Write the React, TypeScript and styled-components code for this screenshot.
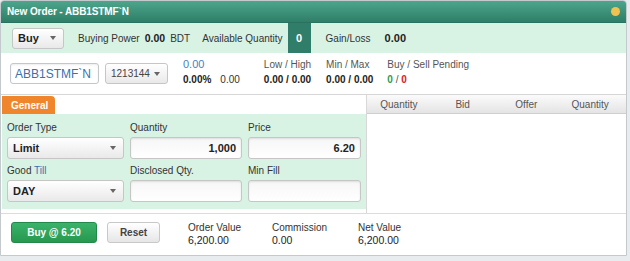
import styled, { createGlobalStyle } from "styled-components";

const GlobalStyle = createGlobalStyle`
  body {
    margin: 0;
    background: #e9ecef;
    font-family: "Liberation Sans", Arial, sans-serif;
    font-size: 10px;
    color: #333;
  }
`;

const Window = styled.div`
  width: 625px;
  height: 254px;
  border: 1px solid #c4c9cd;
  border-radius: 4px 4px 0 0;
  background: #fff;
  display: flex;
  flex-direction: column;
  overflow: hidden;
`;

const TitleBar = styled.div`
  height: 21px;
  flex: none;
  display: flex;
  align-items: center;
  justify-content: space-between;
  padding: 0 6px 0 6px;
  background: linear-gradient(#4ca68b, #2f7e68);
  border-bottom: 1px solid #2a7260;
`;

const Title = styled.div`
  color: #fff;
  font-weight: bold;
  font-size: 10px;
  letter-spacing: -0.1px;
`;

const Dot = styled.span`
  width: 9px;
  height: 9px;
  border-radius: 50%;
  background: #f0c251;
`;

const InfoBar = styled.div`
  height: 30px;
  flex: none;
  display: flex;
  align-items: center;
  padding-left: 11px;
  background: #d8f2e4;
`;

const SelectBox = styled.div<{ $w: number; $h?: number; $bold?: boolean }>`
  width: ${(p) => p.$w}px;
  height: ${(p) => p.$h ?? 21}px;
  box-sizing: border-box;
  flex: none;
  display: flex;
  align-items: center;
  justify-content: space-between;
  padding: 0 7px 0 5px;
  border: 1px solid #c6c6c6;
  border-radius: 3px;
  background: linear-gradient(#ffffff, #e9e9e9);
  font-weight: ${(p) => (p.$bold ? "bold" : "normal")};
  font-size: ${(p) => (p.$bold ? 11 : 10)}px;
  color: ${(p) => (p.$bold ? "#222" : "#444")};
`;

const Caret = styled.span`
  width: 0;
  height: 0;
  border-left: 3.5px solid transparent;
  border-right: 3.5px solid transparent;
  border-top: 4px solid #666;
`;

const Text = styled.span<{ $ml?: number }>`
  margin-left: ${(p) => p.$ml ?? 0}px;
  color: #333;
  white-space: nowrap;
`;

const Strong = styled.span<{ $ml?: number }>`
  margin-left: ${(p) => p.$ml ?? 0}px;
  font-weight: bold;
  font-size: 10.5px;
  color: #222;
`;

const AvailBox = styled.div`
  align-self: stretch;
  width: 23px;
  margin-left: 5px;
  display: flex;
  align-items: center;
  justify-content: center;
  background: #307e69;
  color: #fff;
  font-weight: bold;
  font-size: 11px;
`;

const SymbolRow = styled.div`
  height: 41px;
  flex: none;
  display: flex;
  align-items: center;
  padding-left: 9px;
  border-bottom: 1px solid #d6d6d6;
`;

const SymbolInput = styled.div`
  width: 89px;
  height: 21px;
  box-sizing: border-box;
  display: flex;
  align-items: center;
  padding-left: 4px;
  border: 1px solid #c2c7cc;
  border-radius: 3px;
  color: #3a70ae;
  font-size: 12px;
  box-shadow: inset 0 1px 2px rgba(0, 0, 0, 0.08);
`;

const Stat = styled.div<{ $ml: number }>`
  margin-left: ${(p) => p.$ml}px;
  display: flex;
  flex-direction: column;
  gap: 4px;
  margin-top: -3px;
`;

const StatLabel = styled.span<{ $blue?: boolean }>`
  color: ${(p) => (p.$blue ? "#4a7fbe" : "#555")};
  font-size: ${(p) => (p.$blue ? 11 : 10)}px;
  line-height: 11px;
  white-space: nowrap;
`;

const StatValue = styled.span`
  font-weight: bold;
  font-size: 10px;
  line-height: 11px;
  color: #222;
  white-space: nowrap;
`;

const Plain = styled.span<{ $ml?: number; $color?: string }>`
  margin-left: ${(p) => p.$ml ?? 0}px;
  font-weight: normal;
  color: ${(p) => p.$color ?? "#333"};
`;

const Colored = styled.span<{ $color: string }>`
  color: ${(p) => p.$color};
`;

const Body = styled.div`
  height: 118px;
  flex: none;
  display: flex;
  padding-left: 1px;
`;

const FormPane = styled.div`
  width: 364px;
  flex: none;
  display: flex;
  flex-direction: column;
  border-right: 1px solid #d8d8d8;
`;

const TabRow = styled.div`
  height: 19px;
  flex: none;
  display: flex;
  align-items: flex-end;
`;

const Tab = styled.div`
  width: 53px;
  height: 18px;
  box-sizing: border-box;
  padding-left: 9px;
  display: flex;
  align-items: center;
  background: #f0862b;
  border-radius: 0 4px 0 0;
  color: #fff;
  font-weight: bold;
  font-size: 10px;
`;

const FormGrid = styled.div`
  flex: none;
  display: grid;
  grid-template-columns: 117px 112px 113px;
  column-gap: 6px;
  row-gap: 5px;
  padding: 7px 4px 7px 5px;
  background: #d8f2e4;
`;

const Field = styled.div`
  display: flex;
  flex-direction: column;
  gap: 2px;
`;

const FieldLabel = styled.span`
  height: 14px;
  line-height: 14px;
  color: #333;
`;

const Accent = styled.span`
  color: #2f73b8;
`;

const TextBox = styled.div`
  height: 22px;
  box-sizing: border-box;
  display: flex;
  align-items: center;
  justify-content: flex-end;
  padding-right: 5px;
  border: 1px solid #c6c6c6;
  border-radius: 3px;
  background: linear-gradient(#f6f6f6, #ffffff);
  box-shadow: inset 0 1px 2px rgba(0, 0, 0, 0.1);
  font-weight: bold;
  font-size: 11px;
  color: #222;
`;

const BookPane = styled.div`
  flex: 1;
  display: flex;
  flex-direction: column;
`;

const BookHeader = styled.div`
  height: 18px;
  flex: none;
  display: grid;
  grid-template-columns: repeat(4, 1fr);
  padding-right: 4px;
  background: linear-gradient(#fbfbfb, #e4e4e4);
  border-bottom: 1px solid #cfcfcf;
`;

const BookCol = styled.span`
  display: flex;
  align-items: center;
  justify-content: center;
  color: #555;
`;

const Footer = styled.div`
  flex: 1;
  display: flex;
  align-items: flex-start;
  padding: 8px 0 0 10px;
  border-top: 1px solid #dcdcdc;
`;

const PrimaryButton = styled.div`
  width: 86px;
  height: 21px;
  display: flex;
  align-items: center;
  justify-content: center;
  border-radius: 3px;
  background: linear-gradient(#3ab46a, #27974f);
  border: 1px solid #23894a;
  box-sizing: border-box;
  color: #fff;
  font-weight: bold;
  font-size: 10px;
`;

const SecondaryButton = styled.div`
  width: 53px;
  height: 21px;
  margin-left: 10px;
  display: flex;
  align-items: center;
  justify-content: center;
  box-sizing: border-box;
  border: 1px solid #c8c8c8;
  border-radius: 3px;
  background: linear-gradient(#ffffff, #e6e6e6);
  color: #444;
  font-weight: bold;
  font-size: 10px;
`;

const Summary = styled.div<{ $w: number; $ml?: number }>`
  width: ${(p) => p.$w}px;
  margin-left: ${(p) => p.$ml ?? 0}px;
  margin-top: 0;
  display: flex;
  flex-direction: column;
  gap: 2px;
  line-height: 11px;
`;

const SummaryValue = styled.span`
  font-size: 10.5px;
  color: #222;
`;

const App = () => {
  return (
    <>
      <GlobalStyle />
      <Window>
        <TitleBar>
          <Title>New Order - ABB1STMF`N</Title>
          <Dot />
        </TitleBar>

        <InfoBar>
          <SelectBox $w={52} $bold>
            Buy <Caret />
          </SelectBox>
          <Text $ml={14}>Buying Power</Text>
          <Strong $ml={5}>0.00</Strong>
          <Text $ml={5}>BDT</Text>
          <Text $ml={12}>Available Quantity</Text>
          <AvailBox>0</AvailBox>
          <Text $ml={15}>Gain/Loss</Text>
          <Strong $ml={14} style={{ fontSize: 11 }}>0.00</Strong>
        </InfoBar>

        <SymbolRow>
          <SymbolInput>ABB1STMF`N</SymbolInput>
          <SelectBox $w={63} style={{ marginLeft: 6 }}>
            1213144 <Caret />
          </SelectBox>
          <Stat $ml={15}>
            <StatLabel $blue>0.00</StatLabel>
            <StatValue>
              0.00%<Plain $ml={9}>0.00</Plain>
            </StatValue>
          </Stat>
          <Stat $ml={24}>
            <StatLabel>Low / High</StatLabel>
            <StatValue>0.00 / 0.00</StatValue>
          </Stat>
          <Stat $ml={15}>
            <StatLabel>Min / Max</StatLabel>
            <StatValue>0.00 / 0.00</StatValue>
          </Stat>
          <Stat $ml={14}>
            <StatLabel>Buy / Sell Pending</StatLabel>
            <StatValue>
              <Colored $color="#2e9a4e">0</Colored>
              <Plain $color="#555"> / </Plain>
              <Colored $color="#e02020">0</Colored>
            </StatValue>
          </Stat>
        </SymbolRow>

        <Body>
          <FormPane>
            <TabRow>
              <Tab>General</Tab>
            </TabRow>
            <FormGrid>
              <Field>
                <FieldLabel>Order Type</FieldLabel>
                <SelectBox $w={117} $h={22} $bold>
                  Limit <Caret />
                </SelectBox>
              </Field>
              <Field>
                <FieldLabel>Quantity</FieldLabel>
                <TextBox>1,000</TextBox>
              </Field>
              <Field>
                <FieldLabel>Price</FieldLabel>
                <TextBox>6.20</TextBox>
              </Field>
              <Field>
                <FieldLabel>
                  Good <Accent>Till</Accent>
                </FieldLabel>
                <SelectBox $w={117} $h={22} $bold>
                  DAY <Caret />
                </SelectBox>
              </Field>
              <Field>
                <FieldLabel>Disclosed Qty.</FieldLabel>
                <TextBox />
              </Field>
              <Field>
                <FieldLabel>Min Fill</FieldLabel>
                <TextBox />
              </Field>
            </FormGrid>
          </FormPane>
          <BookPane>
            <BookHeader>
              <BookCol>Quantity</BookCol>
              <BookCol>Bid</BookCol>
              <BookCol>Offer</BookCol>
              <BookCol>Quantity</BookCol>
            </BookHeader>
          </BookPane>
        </Body>

        <Footer>
          <PrimaryButton>Buy @ 6.20</PrimaryButton>
          <SecondaryButton>Reset</SecondaryButton>
          <Summary $w={84} $ml={28}>
            <span>Order Value</span>
            <SummaryValue>6,200.00</SummaryValue>
          </Summary>
          <Summary $w={86}>
            <span>Commission</span>
            <SummaryValue>0.00</SummaryValue>
          </Summary>
          <Summary $w={90}>
            <span>Net Value</span>
            <SummaryValue>6,200.00</SummaryValue>
          </Summary>
        </Footer>
      </Window>
    </>
  );
};

export default App;
